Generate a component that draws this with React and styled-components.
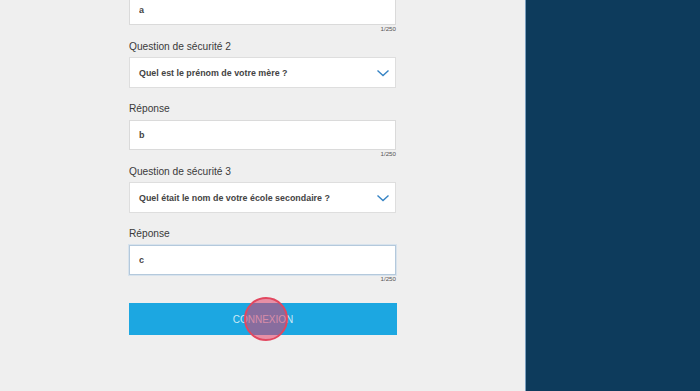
import React from 'react';
import styled, { createGlobalStyle } from 'styled-components';

const GlobalStyle = createGlobalStyle`
	html, body {
		margin: 0;
		padding: 0;
		height: 100%;
		overflow: hidden;
	}
	body {
		font-family: "Liberation Sans", Arial, sans-serif;
		background: #efefef;
	}
	#root {
		height: 100%;
	}
`;

const Page = styled.div`
	display: flex;
	height: 391px;
	width: 700px;
	overflow: hidden;
`;

const FormPane = styled.div`
	flex: 1;
	background: #efefef;
	padding-left: 129px;
`;

const SidePane = styled.div`
	width: 174px;
	background: #0d3b5c;
	border-left: 1px solid #7a9fbf;
`;

const Form = styled.form`
	width: 267px;
	margin-top: -5px;
	display: flex;
	flex-direction: column;
`;

const Label = styled.label`
	display: block;
	font-size: 10.2px;
	line-height: 14px;
	color: #3a3a3a;
	margin-bottom: ${props => (props.tight ? '3px' : '4px')};
`;

const TextInput = styled.input`
	box-sizing: border-box;
	width: 100%;
	height: 30px;
	padding: 0 9px;
	border: 1px solid ${props => (props.focused ? '#b4c9dc' : '#dadada')};
	box-shadow: ${props => (props.focused ? '0 0 0 1px #d8e3ed' : 'none')};
	background: #fff;
	font-family: "Liberation Sans", Arial, sans-serif;
	font-size: 9px;
	font-weight: bold;
	color: #444;
	outline: none;
`;

const Counter = styled.div`
	text-align: right;
	font-size: 6.2px;
	line-height: 7px;
	color: #555;
	margin-bottom: ${props => props.gap || 8}px;
`;

const Select = styled.div`
	box-sizing: border-box;
	height: 31px;
	display: flex;
	align-items: center;
	justify-content: space-between;
	padding: 0 5px 0 9px;
	background: #fff;
	border: 1px solid #dedede;
	font-size: 8.9px;
	font-weight: bold;
	color: #444;
	margin-bottom: 14px;
`;

const Chevron = () => (
	<svg width="14" height="8" viewBox="0 0 14 8">
		<polyline points="1.5,1.5 7,6.5 12.5,1.5" fill="none" stroke="#3583c4" strokeWidth="1.4" />
	</svg>
);

const Button = styled.button`
	position: relative;
	width: 268px;
	height: 32px;
	border: none;
	background: #1ca7e1;
	color: #cdeaf6;
	font-family: "Liberation Sans", Arial, sans-serif;
	font-size: 10px;
	cursor: pointer;
	padding: 0;
	overflow: visible;
`;

const ClickMarker = styled.span`
	position: absolute;
	left: 115px;
	top: -6px;
	width: 40px;
	height: 40px;
	border-radius: 50%;
	border: 2px solid #e2475f;
	background: rgba(226, 62, 104, 0.55);
	pointer-events: none;
`;

const App = () => (
	<Page>
		<GlobalStyle />
		<FormPane>
			<Form onSubmit={e => e.preventDefault()}>
				<TextInput readOnly value="a" />
				<Counter>1/250</Counter>

				<Label tight>Question de sécurité 2</Label>
				<Select>
					<span>Quel est le prénom de votre mère ?</span>
					<Chevron />
				</Select>

				<Label>Réponse</Label>
				<TextInput readOnly value="b" />
				<Counter>1/250</Counter>

				<Label tight>Question de sécurité 3</Label>
				<Select>
					<span>Quel était le nom de votre école secondaire ?</span>
					<Chevron />
				</Select>

				<Label>Réponse</Label>
				<TextInput readOnly focused value="c" />
				<Counter gap={21}>1/250</Counter>

				<Button type="submit">
					CONNEXION
					<ClickMarker />
				</Button>
			</Form>
		</FormPane>
		<SidePane />
	</Page>
);

export default App;
